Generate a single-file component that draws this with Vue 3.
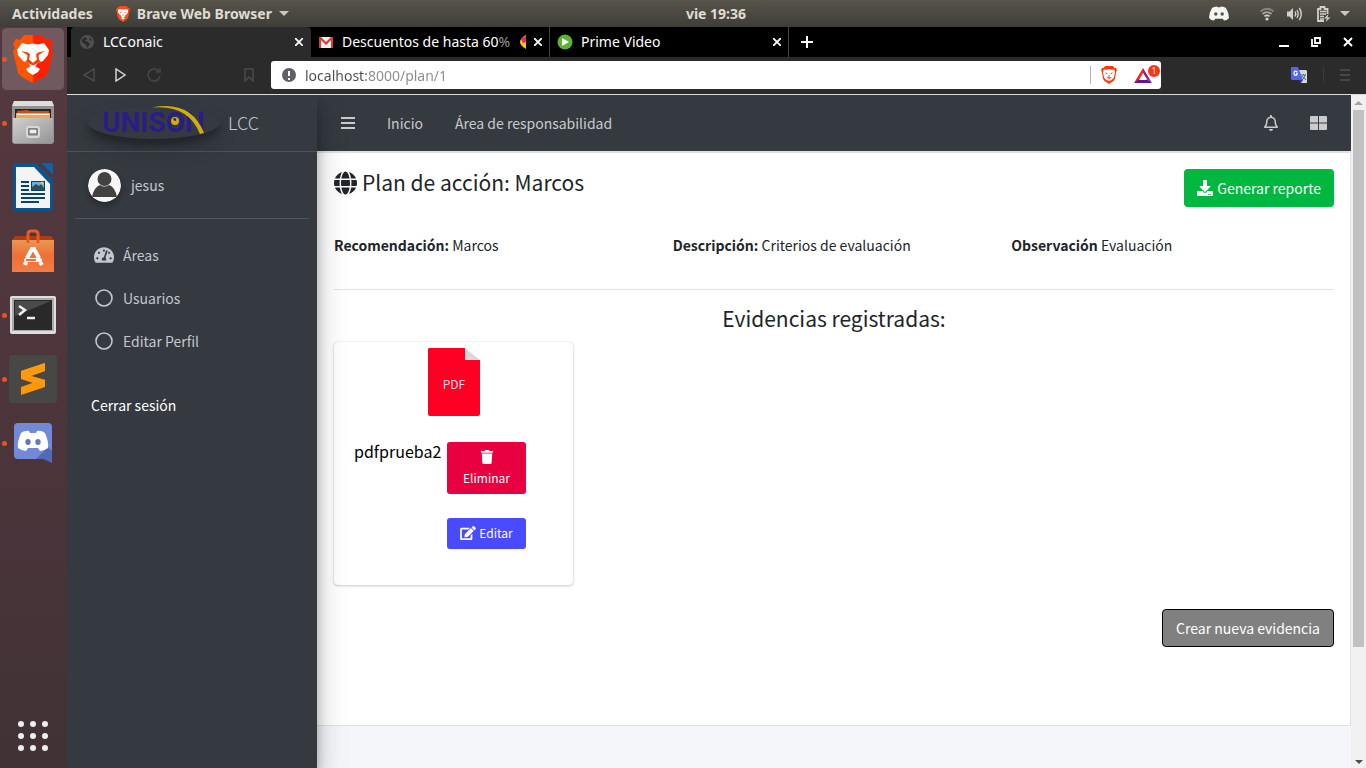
<script setup>
import { ref } from 'vue'

const url = ref('localhost:8000/plan/1')

const details = [
  { label: 'Recomendación:', value: 'Marcos' },
  { label: 'Descripción:', value: 'Criterios de evaluación' },
  { label: 'Observación', value: 'Evaluación' }
]
</script>

<template>
  <div class="desktop">
    <header class="topbar">
      <div class="top-left">
        <button class="top-btn">Actividades</button>
        <button class="top-btn app-menu">
          <svg width="14" height="16" viewBox="0 0 42 48" aria-hidden="true">
            <path d="M11 0h20l5 5 4 0 2 7-2 4-3 18-4 6-12 8-12-8-4-6L2 16 0 12l2-7 4 0z" fill="#ff4a1c" />
            <path d="M6 11l8-2 7 2 7-2 8 2 0 8-6 8-4 2 1 3-6 2-6-2 1-3-4-2-6-8z" fill="#fff" />
            <path d="M10 17l7 2-3 2zM32 17l-7 2 3 2zM18 26h6l-3 3z" fill="#ff4a1c" />
            <path d="M15 36l6-3 6 3-6 5z" fill="#fff" />
          </svg>
          <span>Brave Web Browser</span>
          <svg width="10" height="5" viewBox="0 0 10 5" aria-hidden="true"><path d="M0 0h10L5 5z" fill="#c9c7bf" /></svg>
        </button>
      </div>
      <time class="clock">vie 19:36</time>
      <div class="tray">
        <svg class="tray-discord" width="20" height="15" viewBox="0 0 20 15" aria-hidden="true">
          <path d="M3 2Q5 .3 8 .4l.6.9h2.8l.6-.9Q15 .3 17 2q3 5 3 10-2 2.500-5 2.600l-1.300-1.800H6.300L5 14.600Q2 14.500 0 12 0 7 3 2z" fill="#f4f4f2" />
          <ellipse cx="6.800" cy="8" rx="1.700" ry="1.800" fill="#55534c" /><ellipse cx="13.200" cy="8" rx="1.700" ry="1.800" fill="#55534c" />
        </svg>
        <svg class="tray-wifi" width="16" height="14" viewBox="0 0 16 14" aria-hidden="true" fill="none" stroke-width="1.800">
          <path d="M1.500 4.500Q8-1 14.500 4.500" stroke="#85837b" /><path d="M3.500 7Q8 3.200 12.500 7" stroke="#a8a69f" />
          <path d="M5.500 9.400Q8 7.400 10.500 9.400" stroke="#d4d3cd" /><circle cx="8" cy="12" r="1.600" fill="#d4d3cd" />
        </svg>
        <svg class="tray-sound" width="16" height="14" viewBox="0 0 16 14" aria-hidden="true" fill="none" stroke="#d0cfc9" stroke-width="1.400">
          <path d="M0 4.500h2.500L6 1v12L2.500 9.500H0z" fill="#d0cfc9" stroke="none" />
          <path d="M8 4.500Q9.400 7 8 9.500M10 3Q12.400 7 10 11M12.300 1Q16.200 7 12.300 13" />
        </svg>
        <svg class="tray-battery" width="14" height="16" viewBox="0 0 14 16" aria-hidden="true">
          <path d="M7 15H1V3h2.500V1h4V3H10.500v5" fill="none" stroke="#d0cfc9" stroke-width="1.800" />
          <path d="M3 5.500h6M3 8h6M3 10.500h4M3 13h4" stroke="#d0cfc9" stroke-width="1.400" />
          <path d="M11.500 8L7 12.500h3L8.500 16l5-4.500h-3z" fill="#d0cfc9" />
        </svg>
        <svg width="10" height="5" viewBox="0 0 10 5" aria-hidden="true"><path d="M0 0h10L5 5z" fill="#c9c7bf" /></svg>
      </div>
    </header>

    <div class="workspace">
      <nav class="dock" aria-label="Aplicaciones">
        <button class="dock-item active running" aria-label="Brave">
          <svg width="42" height="48" viewBox="0 0 42 48">
            <defs><linearGradient id="lion"><stop offset=".48" stop-color="#ff5500" /><stop offset=".52" stop-color="#ff2000" /></linearGradient></defs>
            <path d="M12 0h18l4 5 4-1 3 5-2 4 2 3-5 22-4 4-11 6-11-6-4-4L1 16l2-3-2-4 3-5 4 1z" fill="url(#lion)" />
            <path d="M10 8l6 1.500 5-1 5 1 6-1.500 5 7-1 5-5 6-6 2.500-1 2-3 2-3-2-1-2-6-2.500-5-6-1-5z" fill="#fff" />
            <path d="M9 16l7 1.500 2 2-1 5L21 28l4-3.500-1-5 2-2 7-1.500-6.500 4 .5 5 2 1.500-8 4-8-4 2-1.500.5-5z" fill="#ff3b05" />
            <path d="M18.500 19h5l-1 6-1.500 1-1.500-1z" fill="#fff" />
            <path d="M14 34l7-4 7 4-2 3-5 3-5-3z" fill="#fff" />
          </svg>
        </button>
        <button class="dock-item running" aria-label="Archivos">
          <svg width="42" height="46" viewBox="0 0 42 46">
            <defs><linearGradient id="cabinet" x2="1" y2="1"><stop stop-color="#d0d0d0" /><stop offset="1" stop-color="#949494" /></linearGradient></defs>
            <path d="M2 1h38l2 6v35l-2 2H2l-2-2V7z" fill="#929292" /><path d="M2 1h38l2 5H0z" fill="#ddd" />
            <path d="M3 9h36v10H3z" fill="#282423" /><path d="M5 11l10-1 3 1h19v7H5z" fill="#c7501e" />
            <path d="M4 13h34v6H4z" fill="#f2a553" /><path d="M5 14h32v1H5z" fill="#fff1d9" />
            <path d="M1 18h39l1 1v24H1z" fill="url(#cabinet)" />
            <rect x="15" y="27" width="12" height="10" rx="2" fill="#aaa" stroke="#d8d8d8" stroke-width="2" />
            <rect x="17" y="29" width="8" height="5" fill="#eee" stroke="#555" />
          </svg>
        </button>
        <button class="dock-item" aria-label="LibreOffice Writer">
          <svg width="40" height="48" viewBox="0 0 40 48">
            <path d="M2 0h21l17 17v28q0 3-3 3H3q-3 0-3-3V3q0-3 2-3z" fill="#0b5490" />
            <path d="M28 0h10q2 0 2 2v10z" fill="#0a64a5" /><path d="M3 4h18l16 17v24H3z" fill="#f4f4f3" />
            <path d="M8 19h8M8 23h8M8 27h8M8 31h24M8 35h24M8 39h18" stroke="#06456b" stroke-width="2" />
            <path d="M18 18h14v10H18z" fill="#06456b" /><path d="M19 19h12v8H19z" fill="#60b3e4" /><path d="M19 27v-3l4-3 3 2 2-2 3 4v2z" fill="#344c52" /><circle cx="29" cy="20" r="1.500" fill="#edc64c" />
          </svg>
        </button>
        <button class="dock-item" aria-label="Ubuntu Software">
          <svg width="42" height="44" viewBox="0 0 42 44">
            <defs><linearGradient id="bag" x2="0" y2="1"><stop stop-color="#e89752" /><stop offset=".5" stop-color="#ef7035" /><stop offset="1" stop-color="#f47b48" /></linearGradient></defs>
            <path d="M3 7h36l3 4v8H0v-8z" fill="#ae3c18" /><path d="M0 11h42v32H0z" fill="url(#bag)" />
            <path d="M16 14V5q0-3 3-3h4q3 0 3 3v9" fill="none" stroke="#e75c25" stroke-width="3" />
            <path d="M15 29L20 20h2l5 9M14 33l-1 3M28 33l2 3" fill="none" stroke="#fff" stroke-width="4" />
            <rect x="12" y="29" width="18" height="4" rx="2" fill="#fff" /><path d="M14 31h10" stroke="#ef7035" stroke-width="2" />
          </svg>
        </button>
        <button class="dock-item running" aria-label="Terminal">
          <svg width="46" height="38" viewBox="0 0 46 38">
            <rect width="46" height="38" rx="2" fill="#dedede" /><rect x="2" y="2" width="42" height="33" fill="#aaa" />
            <rect x="4" y="4" width="38" height="30" fill="#292929" /><path d="M5 5h36L5 20z" fill="#4a4a4a" />
            <path d="M9 10l6 4-6 5M17 22h8" fill="none" stroke="#eee" stroke-width="2.500" />
          </svg>
        </button>
        <button class="dock-item running" aria-label="Sublime Text">
          <svg width="48" height="48" viewBox="0 0 48 48">
            <rect width="48" height="48" rx="3" fill="#474846" />
            <path d="M12 16l24-8v8l-14 5 14 4v7l-24 8v-8l14-5-14-4z" fill="#ff9800" /><path d="M22 21l14 4v7L12 23z" fill="#ef8412" />
            <path d="M12 16l24-8v8l-15 5 15 4v7L12 24z" fill="#ff9a10" />
          </svg>
        </button>
        <button class="dock-item running" aria-label="Discord">
          <svg width="38" height="40" viewBox="0 0 38 40">
            <path d="M4 0h30q4 0 4 4v36l-9-8 1 4H4q-4 0-4-4V4q0-4 4-4z" fill="#7289da" /><path d="M22 36L34 24l4 4v12l-9-4z" fill="#5369b5" />
            <path d="M7 10q4-3 8-2l1 2h6l1-2q4-1 8 2 4 9 3 15-4 3-8 3l-2-3H14l-2 3q-4 0-8-3-1-6 3-15z" fill="#fff" />
            <ellipse cx="14" cy="19" rx="2.700" ry="3" fill="#6378c5" /><ellipse cx="24" cy="19" rx="2.700" ry="3" fill="#6378c5" />
          </svg>
        </button>
        <button class="dock-item apps" aria-label="Mostrar aplicaciones">
          <svg width="30" height="30" viewBox="0 0 30 30" fill="#eee">
            <circle cx="3" cy="3" r="3" /><circle cx="15" cy="3" r="3" /><circle cx="27" cy="3" r="3" />
            <circle cx="3" cy="15" r="3" /><circle cx="15" cy="15" r="3" /><circle cx="27" cy="15" r="3" />
            <circle cx="3" cy="27" r="3" /><circle cx="15" cy="27" r="3" /><circle cx="27" cy="27" r="3" />
          </svg>
        </button>
      </nav>

      <section class="browser">
        <div class="tabs">
          <div class="tab current">
            <svg width="14" height="14" viewBox="0 0 14 14" aria-hidden="true"><circle cx="7" cy="7" r="7" fill="#505050" /><path d="M2 4l4-2 1 2-2 2 3 1 2 2-3 4-1-3-4-3zM9 2l3 3-2 1z" fill="#2b2b2b" /></svg>
            <span class="tab-title">LCConaic</span>
            <button class="close" aria-label="Cerrar pestaña"><svg width="8" height="8" viewBox="0 0 8 8"><path d="M0 0l8 8M8 0L0 8" stroke="#fff" stroke-width="1.800" /></svg></button>
          </div>
          <div class="tab">
            <svg width="14" height="11" viewBox="0 0 14 11" aria-hidden="true"><path d="M1 0h12v11H1z" fill="#eee" /><path d="M0 0h2l5 5 5-5h2v11h-2V3L7 8 2 3v8H0z" fill="#d83b36" /></svg>
            <span class="tab-title">Descuentos de hasta 60<span class="fade">%</span></span>
            <svg class="emoji" width="6" height="14" viewBox="0 0 6 14" aria-hidden="true"><path d="M6 0Q-6 7 6 14z" fill="#fbc11d" /><path d="M6 1L1 4l2 4 3-1z" fill="#e22672" /></svg>
            <button class="close" aria-label="Cerrar pestaña"><svg width="8" height="8" viewBox="0 0 8 8"><path d="M0 0l8 8M8 0L0 8" stroke="#fff" stroke-width="1.800" /></svg></button>
          </div>
          <div class="tab">
            <svg width="16" height="16" viewBox="0 0 16 16" aria-hidden="true"><circle cx="8" cy="8" r="7.500" fill="#5db32f" /><path d="M5 4l7 4-7 4z" fill="#fff" /></svg>
            <span class="tab-title">Prime Video</span>
            <button class="close" aria-label="Cerrar pestaña"><svg width="8" height="8" viewBox="0 0 8 8"><path d="M0 0l8 8M8 0L0 8" stroke="#fff" stroke-width="1.800" /></svg></button>
          </div>
          <button class="new-tab" aria-label="Nueva pestaña"><svg width="12" height="12" viewBox="0 0 12 12"><path d="M6 0v12M0 6h12" stroke="#fff" stroke-width="2" /></svg></button>
          <div class="window-controls">
            <button aria-label="Minimizar"><svg width="10" height="10" viewBox="0 0 10 10"><path d="M0 9h10" stroke="#fff" stroke-width="2" /></svg></button>
            <button aria-label="Restaurar"><svg width="10" height="10" viewBox="0 0 10 10" fill="none" stroke="#fff" stroke-width="1.800"><path d="M4 1h5v5H4zM1 2v7h6" /></svg></button>
            <button aria-label="Cerrar"><svg width="10" height="10" viewBox="0 0 10 10"><path d="M1 1l8 8M9 1L1 9" stroke="#fff" stroke-width="2" /></svg></button>
          </div>
        </div>

        <div class="toolbar">
          <div class="nav-buttons">
            <button aria-label="Atrás"><svg width="12" height="14" viewBox="0 0 12 14"><path d="M11 1v12L1 7z" fill="none" stroke="#4b4b4b" stroke-width="1.500" /></svg></button>
            <button aria-label="Adelante"><svg width="12" height="14" viewBox="0 0 12 14"><path d="M1 1v12l9-6z" fill="none" stroke="#d5d5d5" stroke-width="1.500" /></svg></button>
            <button aria-label="Recargar"><svg width="14" height="14" viewBox="0 0 14 14"><path d="M11.500 3A6 6 0 1 0 13 8M13 0v4H9" fill="none" stroke="#474747" stroke-width="1.500" /></svg></button>
          </div>
          <button class="bookmark" aria-label="Añadir marcador"><svg width="10" height="14" viewBox="0 0 10 14"><path d="M1 1h8v12L5 9l-4 4z" fill="none" stroke="#4b4b4b" stroke-width="1.500" /></svg></button>
          <div class="address">
            <svg width="14" height="14" viewBox="0 0 14 14" aria-hidden="true"><circle cx="7" cy="7" r="7" fill="#5d6067" /><path d="M7 3v5M7 10v2" stroke="#fff" stroke-width="2" /></svg>
            <input v-model="url" type="text" aria-label="Dirección" />
            <button class="shield" aria-label="Brave Shields">
              <svg width="16" height="18" viewBox="0 0 42 48"><path d="M11 0h20l5 5 4 0 2 7-2 4-3 18-4 6-12 8-12-8-4-6L2 16 0 12l2-7 4 0z" fill="#fb3b0b" /><path d="M7 9l7 1 7-2 7 2 7-1 2 8-3 14-6 6-7 3-7-3-6-6-3-14z" fill="#fff" /><path d="M10 17l7 2-3 3zM32 17l-7 2 3 3zM18 25h6l-3 4zM13 31l8-2 8 2-8 3z" fill="#fb3b0b" /></svg>
            </button>
            <button class="rewards" aria-label="Brave Rewards">
              <svg width="18" height="15" viewBox="0 0 18 15"><path d="M9 0L0 15l9-5z" fill="#ff2418" /><path d="M9 0l9 15-6-5-3-5z" fill="#8d2380" /><path d="M0 15l5-4h8l5 4z" fill="#60189a" /><path d="M9 5l4 7H5z" fill="#fff" /></svg>
              <span class="badge">1</span>
            </button>
          </div>
          <div class="extensions">
            <button aria-label="Traductor"><svg width="16" height="16" viewBox="0 0 16 16"><path d="M6 3h9l1 1v12h-6z" fill="#d3d8da" /><path d="M0 0h7l5 13H1l-1-1z" fill="#5265e8" /><path d="M8 13h4l-2 3z" fill="#3e2bbd" /><path d="M6.500 5Q3 3 3 6q0 3 3 2V6.500H5" fill="none" stroke="#fff" stroke-width="1.300" /><path d="M10 8h5M12.500 7v1M14 8q-1 4-3 5M11 9l4 4" stroke="#526c74" fill="none" /></svg></button>
            <span class="bar"></span>
            <button aria-label="Menú"><svg width="10" height="12" viewBox="0 0 10 12"><path d="M0 1h10M0 6h10M0 11h10" stroke="#464646" stroke-width="2" /></svg></button>
          </div>
        </div>

        <div class="page">
          <aside class="sidebar">
            <a class="brand" href="#">
              <svg class="logo" width="132" height="33" viewBox="0 0 132 33" role="img" aria-label="UNISON">
                <text x="14" y="26" font-family="Roboto, sans-serif" font-weight="700" font-size="28" fill="#2c1c87">UNISON</text>
                <circle cx="87" cy="15" r="4" fill="#d0ad09" />
                <path d="M86 12q3 0 2 3l-3-1z" fill="#2c1c87" />
                <path d="M64 1.500Q103-6 116 27l-4 1Q100-2 64 1.500z" fill="#d0ad09" />
              </svg>
              <span>LCC</span>
            </a>
            <a class="user" href="#">
              <svg class="avatar" width="33" height="33" viewBox="0 0 33 33" aria-hidden="true"><circle cx="16.500" cy="16.500" r="16.500" fill="#f7f7f7" /><circle cx="16.500" cy="10" r="7" fill="#424242" /><path d="M4 28Q6 18 12 16q4 3 9 0 6 2 8 12z" fill="#424242" /></svg>
              <span>jesus</span>
            </a>
            <nav class="side-nav" aria-label="Principal">
              <a href="#">
                <svg width="20" height="18" viewBox="0 0 576 512" fill="currentColor" aria-hidden="true"><path d="M288 32C128.940 32 0 160.940 0 320c0 52.800 14.250 102.260 39.060 144.800 5.610 9.620 16.300 15.200 27.440 15.200h443c11.140 0 21.830-5.580 27.440-15.200C561.750 422.260 576 372.800 576 320c0-159.060-128.940-288-288-288zm0 64c14.710 0 26.580 10.130 30.320 23.650-1.110 2.260-2.640 4.230-3.450 6.670l-9.220 27.670c-5.130 3.490-10.970 6.010-17.640 6.010-17.670 0-32-14.330-32-32S270.330 96 288 96zM96 384c-17.670 0-32-14.330-32-32s14.330-32 32-32 32 14.330 32 32-14.330 32-32 32zm48-160c-17.670 0-32-14.330-32-32s14.330-32 32-32 32 14.330 32 32-14.330 32-32 32zm246.770-72.410l-61.330 184C343.130 347.330 352 364.540 352 384c0 11.720-3.380 22.550-8.880 32H232.880c-5.500-9.450-8.880-20.280-8.880-32 0-33.940 26.500-61.430 59.900-63.590l61.340-184.010c4.170-12.560 17.730-19.450 30.360-15.170 12.570 4.190 19.350 17.790 15.170 30.360zm14.660 57.200l15.520-46.550c3.470-1.290 7.130-2.230 11.050-2.230 17.670 0 32 14.330 32 32s-14.330 32-32 32c-11.380-.01-20.890-6.280-26.570-15.220zM480 384c-17.670 0-32-14.330-32-32s14.330-32 32-32 32 14.330 32 32-14.330 32-32 32z" /></svg>
                <span>Áreas</span>
              </a>
              <a href="#"><svg width="20" height="20" viewBox="0 0 20 20" aria-hidden="true"><circle cx="10" cy="10" r="8" fill="none" stroke="currentColor" stroke-width="1.600" /></svg><span>Usuarios</span></a>
              <a href="#"><svg width="20" height="20" viewBox="0 0 20 20" aria-hidden="true"><circle cx="10" cy="10" r="8" fill="none" stroke="currentColor" stroke-width="1.600" /></svg><span>Editar Perfil</span></a>
            </nav>
            <a class="logout" href="#">Cerrar sesión</a>
          </aside>

          <div class="main">
            <nav class="navbar" aria-label="Superior">
              <button aria-label="Alternar menú"><svg width="14" height="14" viewBox="0 0 14 14"><path d="M0 2h14M0 7h14M0 12h14" stroke="currentColor" stroke-width="2" /></svg></button>
              <a href="#">Inicio</a>
              <a href="#">Área de responsabilidad</a>
              <div class="navbar-end">
                <button aria-label="Notificaciones"><svg width="14" height="16" viewBox="0 0 448 512" fill="currentColor"><path d="M439.390 362.290c-19.320-20.760-55.470-51.990-55.470-154.290 0-77.700-54.480-139.900-127.940-155.160V32c0-17.670-14.320-32-31.980-32s-31.980 14.330-31.980 32v20.840C118.560 68.100 64.080 130.300 64.080 208c0 102.300-36.150 133.530-55.470 154.290-6 6.450-8.660 14.160-8.610 21.710.11 16.400 12.980 32 32.100 32h383.800c19.120 0 32-15.600 32.100-32 .05-7.550-2.610-15.270-8.610-21.710zM67.530 368c21.220-27.970 44.420-74.330 44.530-159.420 0-.2-.06-.38-.06-.58 0-61.860 50.140-112 112-112s112 50.140 112 112c0 .2-.06.38-.06.58.11 85.100 23.310 131.460 44.530 159.420H67.530zM224 512c35.320 0 63.970-28.650 63.970-64H160.030c0 35.350 28.650 64 63.970 64z" /></svg></button>
                <button aria-label="Panel"><svg width="17" height="14" viewBox="0 0 17 14" fill="currentColor"><path d="M0 1q0-1 1-1h7v6.500H0zM9 0h7q1 0 1 1v5.500H9zM0 7.500h8V14H1q-1 0-1-1zM9 7.500h8V13q0 1-1 1H9z" /></svg></button>
              </div>
            </nav>

            <main class="content">
              <div class="heading">
                <h1>
                  <svg width="23" height="24" viewBox="0 0 496 512" fill="currentColor" aria-hidden="true"><path d="M336.500 160C322 70.700 287.800 8 248 8s-74 62.700-88.500 152h177zM152 256c0 22.200 1.200 43.500 3.300 64h185.300c2.100-20.500 3.300-41.800 3.300-64s-1.200-43.500-3.300-64H155.300c-2.100 20.500-3.300 41.800-3.300 64zm324.700-96c-28.600-67.900-86.500-120.400-158-141.600 24.400 33.800 41.200 84.700 50 141.600h108zM177.200 18.400C105.800 39.600 47.800 92.100 19.300 160h108c8.700-56.900 25.500-107.800 49.900-141.600zM487.400 192H372.700c2.100 21 3.300 42.500 3.300 64s-1.200 43-3.300 64h114.600c5.500-20.500 8.600-41.800 8.600-64s-3.100-43.500-8.500-64zM120 256c0-21.500 1.200-43 3.300-64H8.600C3.200 212.500 0 233.800 0 256s3.200 43.500 8.600 64h114.600c-2-21-3.200-42.500-3.200-64zm39.500 96c14.500 89.300 48.700 152 88.500 152s74-62.700 88.500-152h-177zm159.300 141.600c71.400-21.200 129.400-73.700 158-141.600h-108c-8.800 56.900-25.600 107.800-50 141.600zM19.300 352c28.600 67.900 86.500 120.400 158 141.600-24.400-33.800-41.200-84.700-50-141.600h-108z" /></svg>
                  <span>Plan de acción: Marcos</span>
                </h1>
                <button class="report">
                  <svg width="16" height="16" viewBox="0 0 512 512" fill="currentColor" aria-hidden="true"><path d="M216 0h80c13.300 0 24 10.700 24 24v168h87.700c17.800 0 26.700 21.500 14.100 34.100L269.700 378.300c-7.500 7.500-19.800 7.500-27.300 0L90.100 226.100c-12.600-12.600-3.700-34.100 14.100-34.100H192V24c0-13.300 10.700-24 24-24zm296 376v112c0 13.300-10.700 24-24 24H24c-13.300 0-24-10.700-24-24V376c0-13.300 10.700-24 24-24h146.700l49 49c20.100 20.100 52.500 20.100 72.600 0l49-49H488c13.300 0 24 10.700 24 24zm-124 88c0-11-9-20-20-20s-20 9-20 20 9 20 20 20 20-9 20-20zm64 0c0-11-9-20-20-20s-20 9-20 20 9 20 20 20 20-9 20-20z" /></svg>
                  <span>Generar reporte</span>
                </button>
              </div>

              <div class="details">
                <div v-for="d in details" :key="d.label"><b>{{ d.label }}</b> {{ d.value }}</div>
              </div>

              <h2>Evidencias registradas:</h2>

              <article class="card">
                <svg class="pdf" width="52" height="68" viewBox="0 0 52 68" role="img" aria-label="PDF">
                  <path d="M1 0h36v12h15v54q0 2-2 2H2q-2 0-2-2V1z" fill="#ff0025" /><path d="M37 0l15 12H37z" fill="#d9d9d9" />
                  <text x="26" y="41" text-anchor="middle" class="pdf-label">PDF</text>
                </svg>
                <div class="card-row">
                  <span class="file-name">pdfprueba2</span>
                  <div class="actions">
                    <button class="delete">
                      <svg width="14" height="14" viewBox="0 0 448 512" fill="currentColor" aria-hidden="true"><path d="M432 32H312l-9.400-18.700A24 24 0 0 0 281.100 0H166.800a23.720 23.720 0 0 0-21.400 13.300L136 32H16A16 16 0 0 0 0 48v32a16 16 0 0 0 16 16h416a16 16 0 0 0 16-16V48a16 16 0 0 0-16-16zM53.200 467a48 48 0 0 0 47.900 45h245.800a48 48 0 0 0 47.900-45L416 128H32z" /></svg>
                      <span>Eliminar</span>
                    </button>
                    <button class="edit">
                      <svg width="16" height="14" viewBox="0 0 576 512" fill="currentColor" aria-hidden="true"><path d="M402.600 83.200l90.200 90.200c3.800 3.800 3.800 10 0 13.800L274.400 405.600l-92.800 10.300c-12.400 1.400-22.900-9.100-21.500-21.500l10.300-92.800L388.800 83.200c3.800-3.800 10-3.800 13.800 0zm162-22.900l-48.800-48.800c-15.200-15.200-39.900-15.200-55.200 0l-35.400 35.400c-3.800 3.800-3.800 10 0 13.800l90.200 90.200c3.800 3.800 10 3.800 13.800 0l35.400-35.400c15.200-15.300 15.200-40 0-55.200zM384 346.200V448H64V128h229.800c3.200 0 6.200-1.300 8.500-3.500l40-40c7.600-7.600 2.200-20.500-8.500-20.500H48C21.500 64 0 85.500 0 112v352c0 26.500 21.500 48 48 48h352c26.500 0 48-21.500 48-48V306.200c0-10.700-12.900-16-20.500-8.500l-40 40c-2.200 2.300-3.500 5.300-3.500 8.500z" /></svg>
                      <span>Editar</span>
                    </button>
                  </div>
                </div>
              </article>

              <div class="footer-row"><button class="create">Crear nueva evidencia</button></div>
            </main>
          </div>

          <div class="scrollbar" aria-hidden="true">
            <svg width="9" height="4" viewBox="0 0 9 4"><path d="M0 4h9L4.500 0z" fill="#a3a3a3" /></svg>
            <div class="thumb"></div>
            <svg class="down" width="8" height="4" viewBox="0 0 8 4"><path d="M0 0h8L4 4z" fill="#505050" /></svg>
          </div>
        </div>
      </section>
    </div>
  </div>
</template>

<style>
body {
  margin: 0;
}
</style>

<style scoped>
.desktop {
  display: flex;
  flex-direction: column;
  height: 100vh;
  overflow: hidden;
  background: #45353a;
  font-family: "Noto Sans", "Open Sans", sans-serif;
  font-size: 14px;
}
.desktop * {
  box-sizing: border-box;
}
button {
  margin: 0;
  padding: 0;
  border: 0;
  background: none;
  color: inherit;
  font: inherit;
  cursor: pointer;
}
a {
  color: inherit;
  text-decoration: none;
}
svg {
  display: block;
  flex: none;
}

/* system bar */
.topbar {
  display: grid;
  grid-template-columns: 1fr auto 1fr;
  align-items: center;
  flex: none;
  height: 27px;
  padding: 0 16px 0 12px;
  background: linear-gradient(#57544b, #3e3d38);
  color: #dfdbd2;
  font-weight: 700;
  line-height: 20px;
}
.top-left,
.app-menu,
.tray {
  display: flex;
  align-items: center;
}
.top-left {
  gap: 23px;
}
.app-menu {
  gap: 7px;
}
.clock {
  margin-left: 70px;
}
.tray {
  justify-content: flex-end;
}
.tray-discord {
  margin-right: 30px;
}
.tray-wifi {
  margin-right: 12px;
}
.tray-sound {
  margin-right: 14px;
}
.tray-battery {
  margin-right: 9px;
}

.workspace {
  display: flex;
  flex: 1;
  min-height: 0;
}

/* launcher */
.dock {
  display: flex;
  flex-direction: column;
  flex: none;
  width: 67px;
  background: linear-gradient(#55393f, #4d353c 50%, #403235);
}
.dock-item {
  position: relative;
  display: grid;
  place-items: center;
  height: 64px;
  margin: 0 3px 0 2px;
}
.dock-item.active {
  background: #715a5f;
  background-clip: padding-box;
  border: solid transparent;
  border-width: 1px 0;
  border-radius: 5px;
}
.dock-item.running::before {
  content: "";
  position: absolute;
  left: 0;
  width: 5px;
  height: 5px;
  border-radius: 50%;
  background: #e95420;
}
.apps {
  margin-top: auto;
}

/* browser chrome */
.browser {
  display: flex;
  flex: 1;
  flex-direction: column;
  min-width: 0;
}
.tabs {
  display: flex;
  flex: none;
  height: 30px;
  padding-left: 4px;
  background: #000;
  color: #fff;
}
.tab {
  display: flex;
  align-items: center;
  width: 239px;
  padding: 0 7px;
  border-right: 1px solid #444;
}
.tab.current {
  width: 240px;
  padding: 0 8px;
  border-right: 0;
  border-radius: 4px 4px 0 0;
  background: #2b2b2b;
}
.tab > svg:first-child {
  width: 16px;
}
.tab-title {
  flex: 1;
  margin-left: 8px;
  padding-bottom: 2px;
  overflow: hidden;
  white-space: nowrap;
}
.fade {
  color: #999;
}
.emoji {
  margin-right: 8px;
}
.new-tab {
  width: 36px;
  display: grid;
  place-items: center;
}
.window-controls {
  display: flex;
  align-items: center;
  gap: 22px;
  margin-left: auto;
  padding-right: 13px;
}
.toolbar {
  display: flex;
  align-items: center;
  flex: none;
  height: 38px;
  padding: 0 16px 1px;
  border-bottom: 1px solid #dcdcdc;
  background: #2b2b2b;
}
.nav-buttons {
  display: flex;
  gap: 20px;
}
.bookmark {
  margin-left: 83px;
}
.address {
  display: flex;
  align-items: center;
  flex: 1;
  height: 28px;
  margin-left: 17px;
  padding: 0 1px 0 11px;
  border-radius: 3px;
  background: #fff;
}
.address input {
  flex: 1;
  min-width: 0;
  height: 26px;
  margin-left: 9px;
  padding: 0;
  border: 0;
  outline: 0;
  background: linear-gradient(90deg, #4c4c4c 61px, #8b8b8b 61px);
  background-clip: text;
  -webkit-background-clip: text;
  color: transparent;
  font: inherit;
}
.shield {
  padding-left: 10px;
  border-left: 1px solid #b5b5b5;
}
.rewards {
  position: relative;
  margin-left: 17px;
  padding-right: 8px;
}
.badge {
  position: absolute;
  top: -3px;
  right: 0;
  width: 12px;
  height: 12px;
  border-radius: 50%;
  background: #fb3517;
  color: #fff;
  font-size: 8px;
  line-height: 12px;
  text-align: center;
}
.extensions {
  display: flex;
  align-items: center;
  gap: 16px;
  margin-left: 130px;
}
.bar {
  width: 1px;
  height: 16px;
  background: #3c3c3c;
}

/* web page */
.page {
  display: flex;
  flex: 1;
  min-height: 0;
  overflow: hidden;
  background: #f4f6f9;
  color: #212529;
  font-family: "Source Sans Pro", "Noto Sans CJK SC", sans-serif;
  font-size: 14px;
  line-height: 24px;
}
.sidebar {
  position: relative;
  z-index: 2;
  flex: none;
  width: 250px;
  background: #343a40;
  box-shadow: 0 14px 28px rgba(0, 0, 0, 0.25), 0 10px 10px rgba(0, 0, 0, 0.22);
  color: #c2c7d0;
}
.brand {
  display: flex;
  align-items: center;
  gap: 8px;
  height: 57px;
  padding: 0 0 2px 21px;
  border-bottom: 1px solid #4b545c;
  font-size: 18px;
  font-weight: 300;
}
.logo {
  overflow: visible;
  border-radius: 50%;
  box-shadow: 0 10px 20px rgba(0, 0, 0, 0.19), 0 6px 6px rgba(0, 0, 0, 0.23);
}
.user {
  display: flex;
  align-items: center;
  gap: 10px;
  height: 67px;
  margin: 0 8px;
  padding-left: 13px;
  border-bottom: 1px solid #4f5962;
}
.avatar {
  border-radius: 50%;
  box-shadow: 0 3px 6px rgba(0, 0, 0, 0.3);
}
.side-nav {
  padding-top: 14px;
}
.side-nav a {
  display: flex;
  align-items: center;
  gap: 9px;
  height: 43px;
  padding-left: 27px;
}
.logout {
  display: block;
  margin: 31px 24px 0;
  color: #fff;
}
.main {
  flex: 1;
  min-width: 0;
}
.navbar {
  display: flex;
  align-items: center;
  gap: 32px;
  height: 58px;
  padding: 0 24px;
  border-bottom: 2px solid #dee2e6;
  background: #343a40;
  color: #c9cbcd;
}
.navbar-end {
  display: flex;
  align-items: center;
  gap: 32px;
  margin-left: auto;
}
.content {
  padding: 16px 16px 78px 17px;
  border: solid #dee2e6;
  border-width: 0 1px 1px 0;
  background: #fff;
}
.heading {
  display: flex;
  align-items: flex-start;
  justify-content: space-between;
}
h1,
h2 {
  margin: 0;
  font-size: 21px;
  font-weight: 400;
  line-height: 24px;
}
h1 {
  display: flex;
  align-items: center;
  gap: 5px;
  min-height: 28px;
}
h1 span {
  padding-bottom: 2px;
}
.report,
.create {
  display: flex;
  align-items: center;
  gap: 4px;
  height: 38px;
  padding: 0 13px;
  border-radius: 4px;
  color: #fff;
}
.report {
  background: #00b83f;
}
.details {
  display: grid;
  grid-template-columns: repeat(3, 1fr);
  column-gap: 16px;
  margin-bottom: 16px;
  padding: 26px 0 32px;
  border-bottom: 1px solid #e3e3e3;
}
h2 {
  text-align: center;
}
.card {
  width: 239px;
  margin-top: 12px;
  padding: 6px 20px 36px;
  border-radius: 4px;
  box-shadow: 0 0 1px rgba(0, 0, 0, 0.25), 0 1px 3px rgba(0, 0, 0, 0.2);
}
.pdf {
  margin: 0 auto;
}
.pdf-label {
  fill: #ffd9de;
  font-family: "Noto Sans CJK SC", sans-serif;
  font-size: 12px;
}
.card-row {
  display: flex;
  align-items: flex-start;
  justify-content: space-between;
  margin-top: 26px;
  padding-right: 27px;
}
.file-name {
  color: #000;
  font-size: 16px;
  line-height: 18px;
}
.actions {
  display: grid;
  gap: 24px;
  width: 79px;
  color: #fff;
  font-size: 12px;
  line-height: 20px;
}
.delete,
.edit {
  display: flex;
  align-items: center;
  justify-content: center;
  border-radius: 3px;
}
.delete {
  flex-direction: column;
  gap: 4px;
  height: 52px;
  padding-top: 2px;
  background: #e80040;
}
.edit {
  gap: 3px;
  height: 31px;
  padding-bottom: 1px;
  background: #484bff;
}
.footer-row {
  display: flex;
  justify-content: flex-end;
  margin-top: 24px;
}
.create {
  border: 1px solid #000;
  background: #808080;
}
.scrollbar {
  display: flex;
  flex-direction: column;
  align-items: center;
  flex: none;
  width: 15px;
  padding: 6px 0 4px;
  background: #f1f1f1;
}
.thumb {
  flex: none;
  width: 11px;
  height: 81%;
  margin-top: 5px;
  background: #c1c1c1;
}
.down {
  margin-top: auto;
}
</style>
